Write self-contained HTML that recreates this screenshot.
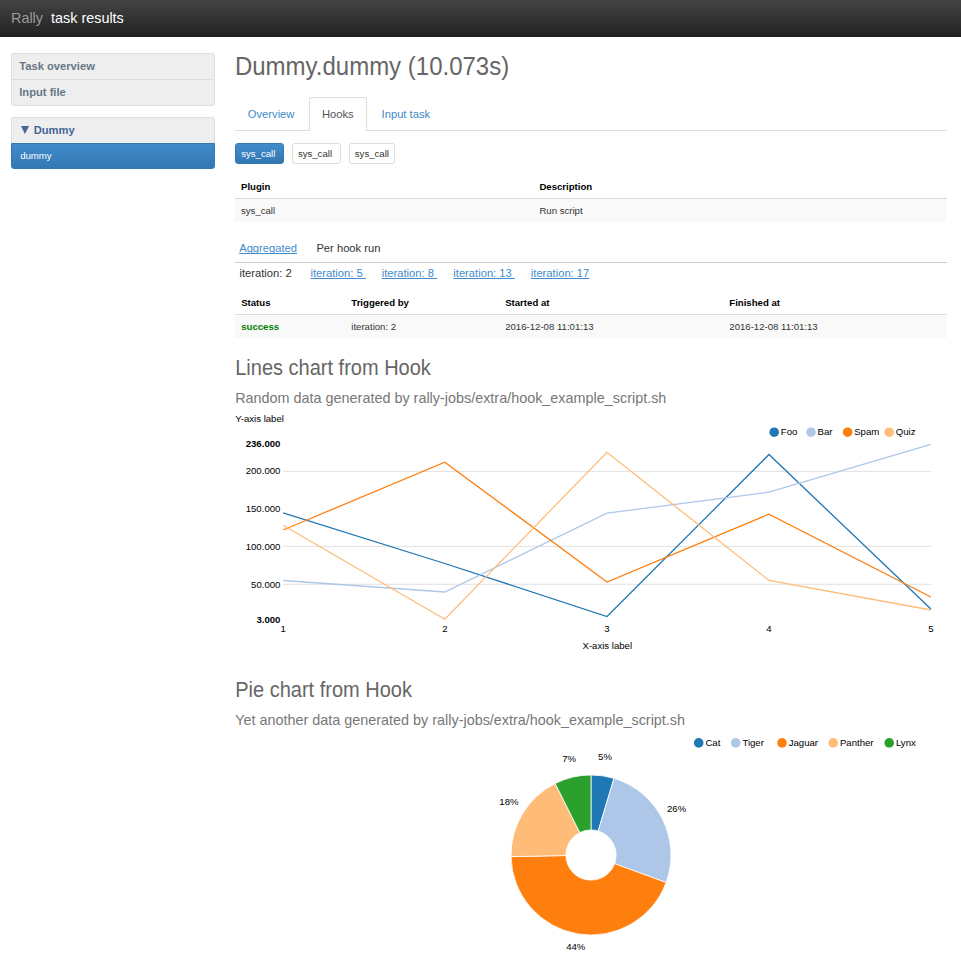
<!DOCTYPE html>
<html><head><meta charset="utf-8"><title>Rally task results</title>
<style>
html,body{margin:0;padding:0}
body{font-family:"Liberation Sans",sans-serif;background:#fff;width:961px;height:966px;overflow:hidden;position:relative}
.t{position:absolute;white-space:nowrap}
.b{position:absolute}
</style></head><body>

<div class="b" style="left:0;top:0;width:961px;height:36px;background:linear-gradient(to bottom,#444 0,#222 100%)"></div>
<div class="b" style="left:0;top:36px;width:961px;height:1px;background:#202020"></div>
<div class="b" style="left:11px;top:53px;width:202px;height:51px;background:#eee;border:1px solid #ddd;border-radius:3px"></div>
<div class="b" style="left:12px;top:79px;width:202px;height:1px;background:#ddd"></div>
<div class="b" style="left:11px;top:117px;width:202px;height:25px;background:#eee;border:1px solid #ddd;border-bottom:none;border-radius:3px 3px 0 0"></div>
<div class="b" style="left:11px;top:143px;width:202px;height:24px;background:linear-gradient(to bottom,#428bca 0,#3278b3 100%);border:1px solid #3278b3;border-radius:0 0 3px 3px"></div>
<svg class="b" style="left:20px;top:126px" width="10" height="9"><path d="M1.0 0.1 H9.1 L4.95 8.1 Z" fill="#469"/></svg>
<div class="b" style="left:235px;top:130px;width:712px;height:1px;background:#ddd"></div>
<div class="b" style="left:309px;top:97px;width:56px;height:33px;background:#fff;border:1px solid #ddd;border-bottom:none;border-radius:3px 3px 0 0"></div>
<div class="b" style="left:235px;top:143px;width:47px;height:19px;background:linear-gradient(to bottom,#428bca 0,#3278b3 100%);border:1px solid #3278b3;border-radius:3px"></div>
<div class="b" style="left:292px;top:143px;width:47px;height:19px;background:#fff;border:1px solid #ddd;border-radius:3px"></div>
<div class="b" style="left:349px;top:143px;width:44px;height:19px;background:#fff;border:1px solid #ddd;border-radius:3px"></div>
<div class="b" style="left:235px;top:197.7px;width:712px;height:1.6px;background:#ddd"></div>
<div class="b" style="left:235px;top:199.3px;width:712px;height:22.7px;background:#f9f9f9"></div>
<div class="b" style="left:235px;top:262px;width:712px;height:1px;background:#ccc"></div>
<div class="b" style="left:235px;top:313.7px;width:712px;height:1.6px;background:#ddd"></div>
<div class="b" style="left:235px;top:315.3px;width:712px;height:22.7px;background:#f9f9f9"></div>

<svg class="b" style="left:0;top:0" width="961" height="966" viewBox="0 0 961 966">
<line x1="283" x2="931" y1="471.4" y2="471.4" stroke="#e2e2e2" stroke-width="1"/>
<line x1="283" x2="931" y1="546.4" y2="546.4" stroke="#e2e2e2" stroke-width="1"/>
<line x1="283" x2="931" y1="584.3" y2="584.3" stroke="#e2e2e2" stroke-width="1"/>
<text x="280.4" y="446.8" font-family="Liberation Sans" font-size="9.6" font-weight="bold" text-anchor="end" fill="#000">236.000</text>
<text x="280.4" y="473.7" font-family="Liberation Sans" font-size="9.6" font-weight="normal" text-anchor="end" fill="#000">200.000</text>
<text x="280.4" y="511.9" font-family="Liberation Sans" font-size="9.6" font-weight="normal" text-anchor="end" fill="#000">150.000</text>
<text x="280.4" y="549.9" font-family="Liberation Sans" font-size="9.6" font-weight="normal" text-anchor="end" fill="#000">100.000</text>
<text x="280.4" y="587.8" font-family="Liberation Sans" font-size="9.6" font-weight="normal" text-anchor="end" fill="#000">50.000</text>
<text x="280.4" y="622.6" font-family="Liberation Sans" font-size="9.6" font-weight="bold" text-anchor="end" fill="#000">3.000</text>
<text x="283.1" y="631.9" font-family="Liberation Sans" font-size="9.6" text-anchor="middle" fill="#000">1</text>
<text x="444.8" y="631.9" font-family="Liberation Sans" font-size="9.6" text-anchor="middle" fill="#000">2</text>
<text x="607" y="631.9" font-family="Liberation Sans" font-size="9.6" text-anchor="middle" fill="#000">3</text>
<text x="769" y="631.9" font-family="Liberation Sans" font-size="9.6" text-anchor="middle" fill="#000">4</text>
<text x="930.9" y="631.9" font-family="Liberation Sans" font-size="9.6" text-anchor="middle" fill="#000">5</text>
<text x="607.3" y="648.7" font-family="Liberation Sans" font-size="9.6" text-anchor="middle" fill="#000">X-axis label</text>
<polyline points="283.1,512.9 444.8,563.5 607,616.5 769,454.5 930.9,609" fill="none" stroke="#1f77b4" stroke-width="1.3" stroke-linejoin="miter"/>
<polyline points="283.1,580.5 444.8,592 607,513.2 769,492.2 930.9,444.3" fill="none" stroke="#aec7e8" stroke-width="1.3" stroke-linejoin="miter"/>
<polyline points="283.1,530 444.8,462.2 607,582 769,514.2 930.9,597" fill="none" stroke="#ff7f0e" stroke-width="1.3" stroke-linejoin="miter"/>
<polyline points="283.1,525.3 444.8,619.2 607,452.3 769,580.5 930.9,610" fill="none" stroke="#ffbb78" stroke-width="1.3" stroke-linejoin="miter"/>
<circle cx="774.2" cy="432.2" r="4.8" fill="#1f77b4"/>
<text x="780.8000000000001" y="434.9" font-family="Liberation Sans" font-size="9.6" fill="#000">Foo</text>
<circle cx="811" cy="432.2" r="4.8" fill="#aec7e8"/>
<text x="817.6" y="434.9" font-family="Liberation Sans" font-size="9.6" fill="#000">Bar</text>
<circle cx="847.6" cy="432.2" r="4.8" fill="#ff7f0e"/>
<text x="854.2" y="434.9" font-family="Liberation Sans" font-size="9.6" fill="#000">Spam</text>
<circle cx="889.2" cy="432.2" r="4.8" fill="#ffbb78"/>
<text x="895.8000000000001" y="434.9" font-family="Liberation Sans" font-size="9.6" fill="#000">Quiz</text>
</svg>
<svg class="b" style="left:0;top:0" width="961" height="966" viewBox="0 0 961 966">
<path d="M591.00,775.00 A80.0,80.0 0 0 1 613.99,778.37 L598.21,830.96 A25.1,25.1 0 0 0 591.00,829.90 Z" fill="#1f77b4" stroke="#fff" stroke-width="0.8"/>
<path d="M613.99,778.37 A80.0,80.0 0 0 1 666.13,882.49 L614.57,863.63 A25.1,25.1 0 0 0 598.21,830.96 Z" fill="#aec7e8" stroke="#fff" stroke-width="0.8"/>
<path d="M666.13,882.49 A80.0,80.0 0 0 1 511.02,856.68 L565.91,855.53 A25.1,25.1 0 0 0 614.57,863.63 Z" fill="#ff7f0e" stroke="#fff" stroke-width="0.8"/>
<path d="M511.02,856.68 A80.0,80.0 0 0 1 555.18,783.47 L579.76,832.56 A25.1,25.1 0 0 0 565.91,855.53 Z" fill="#ffbb78" stroke="#fff" stroke-width="0.8"/>
<path d="M555.18,783.47 A80.0,80.0 0 0 1 591.00,775.00 L591.00,829.90 A25.1,25.1 0 0 0 579.76,832.56 Z" fill="#2ca02c" stroke="#fff" stroke-width="0.8"/>
<text x="605" y="759.9" font-family="Liberation Sans" font-size="9.6" text-anchor="middle" fill="#000">5%</text>
<text x="676.6" y="811.9" font-family="Liberation Sans" font-size="9.6" text-anchor="middle" fill="#000">26%</text>
<text x="575.8" y="949.6" font-family="Liberation Sans" font-size="9.6" text-anchor="middle" fill="#000">44%</text>
<text x="508.9" y="805.1" font-family="Liberation Sans" font-size="9.6" text-anchor="middle" fill="#000">18%</text>
<text x="569.2" y="762" font-family="Liberation Sans" font-size="9.6" text-anchor="middle" fill="#000">7%</text>
<circle cx="698.7" cy="742.9" r="4.8" fill="#1f77b4"/>
<text x="705.4000000000001" y="745.8" font-family="Liberation Sans" font-size="9.6" fill="#000">Cat</text>
<circle cx="735.7" cy="742.9" r="4.8" fill="#aec7e8"/>
<text x="742.4000000000001" y="745.8" font-family="Liberation Sans" font-size="9.6" fill="#000">Tiger</text>
<circle cx="782" cy="742.9" r="4.8" fill="#ff7f0e"/>
<text x="788.7" y="745.8" font-family="Liberation Sans" font-size="9.6" fill="#000">Jaguar</text>
<circle cx="833.2" cy="742.9" r="4.8" fill="#ffbb78"/>
<text x="839.9000000000001" y="745.8" font-family="Liberation Sans" font-size="9.6" fill="#000">Panther</text>
<circle cx="889.2" cy="742.9" r="4.8" fill="#2ca02c"/>
<text x="895.9000000000001" y="745.8" font-family="Liberation Sans" font-size="9.6" fill="#000">Lynx</text>
</svg>
<div class="t" style="left:11.00px;top:10.10px;font-size:14.4px;line-height:17px;color:#999;">Rally</div>
<div class="t" style="left:51.00px;top:10.10px;font-size:14.4px;line-height:17px;color:#fff;">task results</div>
<div class="t" style="left:19.20px;top:60.10px;font-size:11.2px;line-height:13px;color:#678;font-weight:bold;">Task overview</div>
<div class="t" style="left:19.20px;top:86.10px;font-size:11.2px;line-height:13px;color:#678;font-weight:bold;">Input file</div>
<div class="t" style="left:33.70px;top:124.10px;font-size:11.2px;line-height:13px;color:#469;font-weight:bold;">Dummy</div>
<div class="t" style="left:20.20px;top:150.11px;font-size:9.6px;line-height:12px;color:#fff;">dummy</div>
<div class="t" style="left:234.90px;top:52.10px;font-size:24px;line-height:29px;color:#666;transform:scaleY(1.05);transform-origin:0 23.00px;">Dummy.dummy (10.073s)</div>
<div class="t" style="left:247.80px;top:108.10px;font-size:11.2px;line-height:13px;color:#428bca;">Overview</div>
<div class="t" style="left:322.00px;top:108.10px;font-size:11.2px;line-height:13px;color:#555;">Hooks</div>
<div class="t" style="left:381.60px;top:108.10px;font-size:11.2px;line-height:13px;color:#428bca;">Input task</div>
<div class="t" style="left:241.20px;top:148.11px;font-size:9.6px;line-height:12px;color:#fff;">sys_call</div>
<div class="t" style="left:297.90px;top:148.11px;font-size:9.6px;line-height:12px;color:#333;">sys_call</div>
<div class="t" style="left:354.80px;top:148.11px;font-size:9.6px;line-height:12px;color:#333;">sys_call</div>
<div class="t" style="left:241.00px;top:181.11px;font-size:9.6px;line-height:12px;color:#000;font-weight:bold;">Plugin</div>
<div class="t" style="left:539.40px;top:181.11px;font-size:9.6px;line-height:12px;color:#000;font-weight:bold;">Description</div>
<div class="t" style="left:241.00px;top:205.11px;font-size:9.6px;line-height:12px;color:#333;">sys_call</div>
<div class="t" style="left:539.40px;top:205.11px;font-size:9.6px;line-height:12px;color:#333;">Run script</div>
<div class="t" style="left:239.20px;top:242.10px;font-size:11.2px;line-height:13px;color:#428bca;text-decoration:underline;text-decoration-skip-ink:none;">Aggregated</div>
<div class="t" style="left:316.40px;top:242.10px;font-size:11.2px;line-height:13px;color:#333;">Per hook run</div>
<div class="t" style="left:239.40px;top:267.10px;font-size:11.2px;line-height:13px;color:#333;">iteration: 2</div>
<div class="t" style="left:310.50px;top:267.10px;font-size:11.2px;line-height:13px;color:#428bca;text-decoration:underline;text-decoration-skip-ink:none;">iteration: 5&nbsp;</div>
<div class="t" style="left:381.70px;top:267.10px;font-size:11.2px;line-height:13px;color:#428bca;text-decoration:underline;text-decoration-skip-ink:none;">iteration: 8&nbsp;</div>
<div class="t" style="left:453.30px;top:267.10px;font-size:11.2px;line-height:13px;color:#428bca;text-decoration:underline;text-decoration-skip-ink:none;">iteration: 13&nbsp;</div>
<div class="t" style="left:530.80px;top:267.10px;font-size:11.2px;line-height:13px;color:#428bca;text-decoration:underline;text-decoration-skip-ink:none;">iteration: 17</div>
<div class="t" style="left:241.20px;top:297.11px;font-size:9.6px;line-height:12px;color:#000;font-weight:bold;">Status</div>
<div class="t" style="left:351.30px;top:297.11px;font-size:9.6px;line-height:12px;color:#000;font-weight:bold;">Triggered by</div>
<div class="t" style="left:505.20px;top:297.11px;font-size:9.6px;line-height:12px;color:#000;font-weight:bold;">Started at</div>
<div class="t" style="left:729.30px;top:297.11px;font-size:9.6px;line-height:12px;color:#000;font-weight:bold;">Finished at</div>
<div class="t" style="left:241.20px;top:321.11px;font-size:9.6px;line-height:12px;color:green;font-weight:bold;">success</div>
<div class="t" style="left:351.30px;top:321.11px;font-size:9.6px;line-height:12px;color:#333;">iteration: 2</div>
<div class="t" style="left:505.20px;top:321.11px;font-size:9.6px;line-height:12px;color:#333;">2016-12-08 11:01:13</div>
<div class="t" style="left:729.30px;top:321.11px;font-size:9.6px;line-height:12px;color:#333;">2016-12-08 11:01:13</div>
<div class="t" style="left:235.20px;top:356.10px;font-size:20px;line-height:24px;color:#666;transform:scaleY(1.07);transform-origin:0 19.00px;">Lines chart from Hook</div>
<div class="t" style="left:235.20px;top:390.10px;font-size:14.4px;line-height:17px;color:#777;">Random data generated by rally-jobs/extra/hook_example_script.sh</div>
<div class="t" style="left:235.20px;top:413.11px;font-size:9.6px;line-height:12px;color:#000;">Y-axis label</div>
<div class="t" style="left:235.20px;top:678.10px;font-size:20px;line-height:24px;color:#666;transform:scaleY(1.07);transform-origin:0 19.00px;">Pie chart from Hook</div>
<div class="t" style="left:235.20px;top:712.10px;font-size:14.4px;line-height:17px;color:#777;">Yet another data generated by rally-jobs/extra/hook_example_script.sh</div>
</body></html>
